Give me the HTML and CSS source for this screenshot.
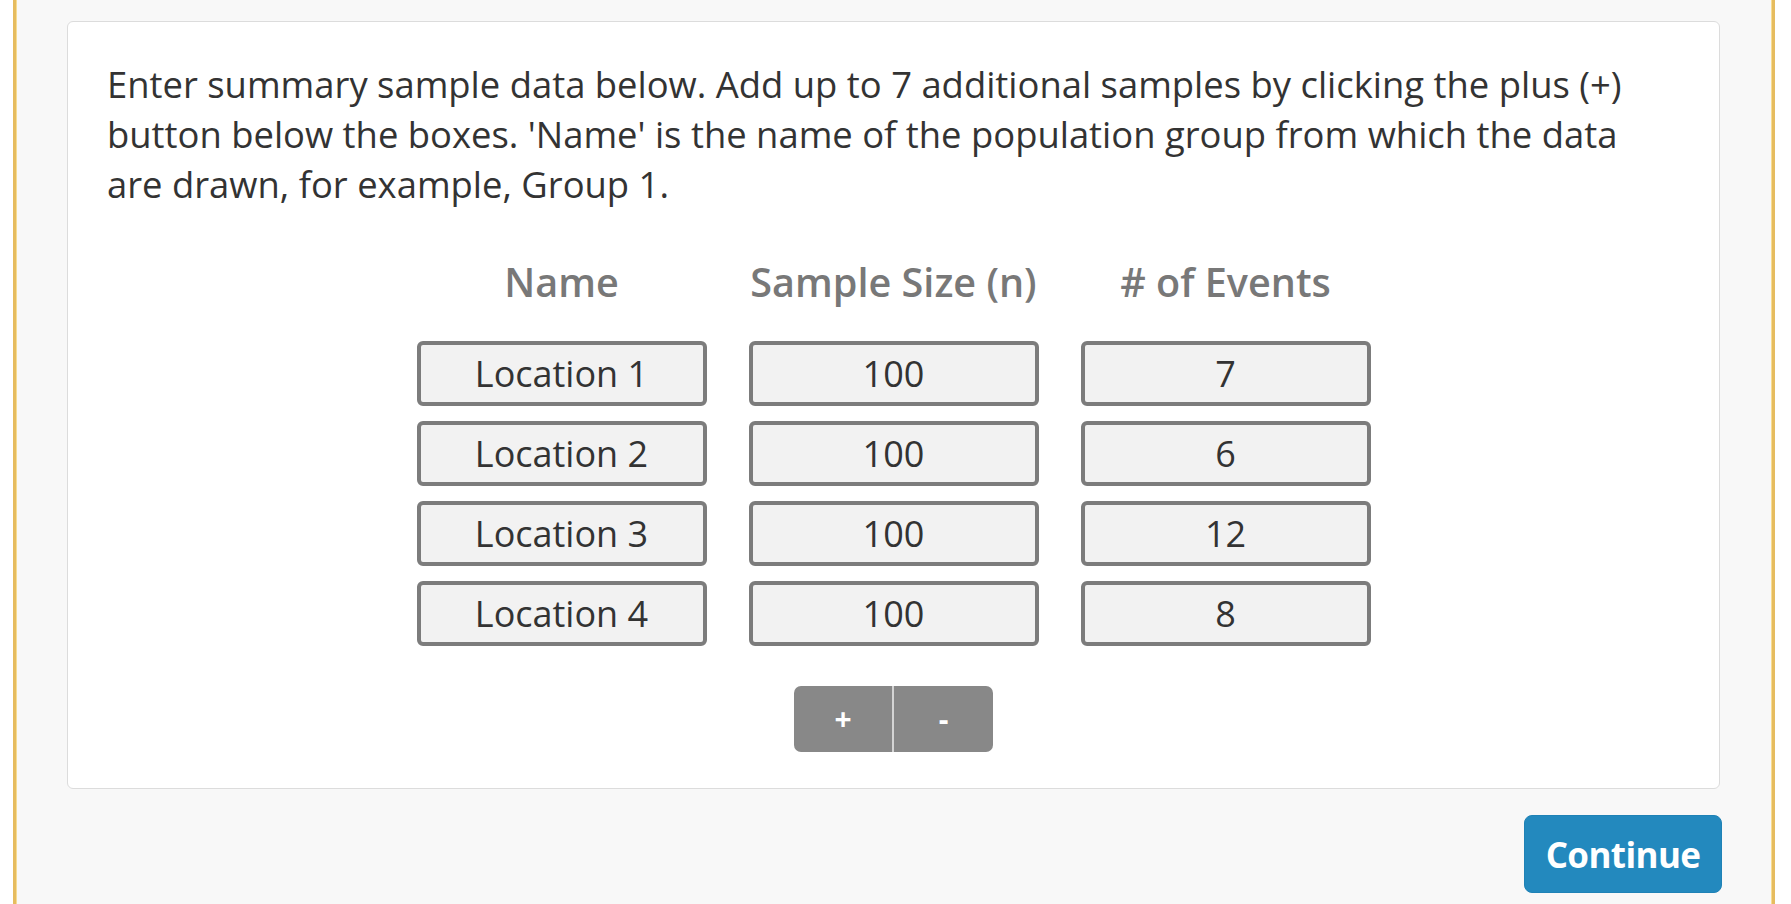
FILE: index.html
```html
<!DOCTYPE html>
<html lang="en">
<head>
<meta charset="utf-8">
<title>Summary sample data</title>
<link rel="stylesheet" href="styles.css">
</head>
<body>
<div class="frame">
  <div class="card">
    <p class="intro">Enter summary sample data below. Add up to 7 additional samples by clicking the plus (+) button below the boxes. 'Name' is the name of the population group from which the data are drawn, for example, Group 1.</p>
    <div class="grid">
      <div class="head">Name</div>
      <div class="head">Sample Size (n)</div>
      <div class="head"># of Events</div>

      <input class="cell" type="text" value="Location 1">
      <input class="cell" type="text" value="100">
      <input class="cell" type="text" value="7">

      <input class="cell" type="text" value="Location 2">
      <input class="cell" type="text" value="100">
      <input class="cell" type="text" value="6">

      <input class="cell" type="text" value="Location 3">
      <input class="cell" type="text" value="100">
      <input class="cell" type="text" value="12">

      <input class="cell" type="text" value="Location 4">
      <input class="cell" type="text" value="100">
      <input class="cell" type="text" value="8">
    </div>
    <div class="pm">
      <button class="pm-btn pm-plus" type="button">+</button>
      <button class="pm-btn pm-minus" type="button">-</button>
    </div>
  </div>
  <div class="actions">
    <button class="continue" type="button">Continue</button>
  </div>
</div>
</body>
</html>
```

FILE: styles.css
```css
html, body {
  margin: 0;
  padding: 0;
  background: #ffffff;
  font-family: "Open Sans", "Noto Sans", "Liberation Sans", sans-serif;
  overflow: hidden;
}

.frame {
  box-sizing: border-box;
  margin-left: 13px;
  width: 1762px;
  min-height: 904px;
  background: #f8f8f8;
  border-left: 3px solid #e6bc5f;
  border-right: 3px solid #e6bc5f;
  box-shadow: inset 1px 0 0 #f7dc92, inset -1px 0 0 #f7dc92;
  padding: 21px 52px 0 51px;
}

.card {
  box-sizing: border-box;
  background: #ffffff;
  border: 1px solid #dcdcdc;
  border-radius: 6px;
  padding: 37px 39px 36px 39px;
  display: flex;
  flex-direction: column;
  align-items: center;
}

.intro {
  align-self: stretch;
  margin: 0;
  font-size: 36.4px;
  line-height: 50px;
  color: #333333;
}

.grid {
  margin-top: 48px;
  display: grid;
  grid-template-columns: repeat(3, 290px);
  column-gap: 42px;
  row-gap: 15px;
}

.head {
  text-align: center;
  font-size: 39.6px;
  font-weight: 600;
  line-height: 50px;
  color: #787878;
  white-space: nowrap;
  margin-bottom: 19px;
}

.cell {
  box-sizing: border-box;
  width: 290px;
  height: 65px;
  margin: 0;
  padding: 0 8px;
  border: 4px solid #7c7c7c;
  border-radius: 6px;
  background: #f2f2f2;
  font-family: "Open Sans", "Noto Sans", "Liberation Sans", sans-serif;
  font-size: 36px;
  color: #333333;
  text-align: center;
  outline: none;
}

.pm {
  margin-top: 40px;
  display: flex;
  border-radius: 7px;
  overflow: hidden;
}

.pm-btn {
  box-sizing: border-box;
  width: 99px;
  height: 66px;
  margin: 0;
  border: none;
  background: #888888;
  color: #ffffff;
  font-family: "Open Sans", "Noto Sans", "Liberation Sans", sans-serif;
  font-weight: 700;
  font-size: 30px;
  line-height: 66px;
  padding: 0;
}

.pm-plus {
  border-right: 2px solid #d4d4d4;
  width: 100px;
}

.actions {
  display: flex;
  justify-content: flex-end;
  margin-top: 26px;
}

.continue {
  box-sizing: border-box;
  width: 198px;
  height: 78px;
  margin: 0 -2px 0 0;
  border: 1px solid #1f82b6;
  border-radius: 8px;
  background: #2389be;
  color: #ffffff;
  font-family: "Open Sans", "Noto Sans", "Liberation Sans", sans-serif;
  font-weight: 700;
  font-size: 35px;
  letter-spacing: -0.6px;
  padding: 0;
}
```
